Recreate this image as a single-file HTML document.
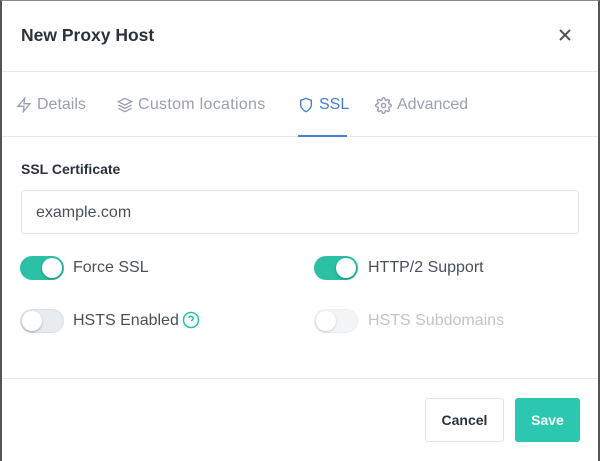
<!DOCTYPE html>
<html><head><style>
*{box-sizing:border-box;margin:0;padding:0}
body{width:600px;height:461px;background:#fff;font-family:"Liberation Sans",sans-serif;position:relative;overflow:hidden;color:#495057}
.frame{position:absolute;left:0;top:0;width:600px;height:461px;border-left:2px solid #555;border-right:2px solid #555;border-top:1px solid #888}
.abs{position:absolute}
.hr{position:absolute;left:2px;right:2px;height:1px;background:#e6e8eb}
.title{left:21px;top:25px;font-size:17.5px;font-weight:bold;color:#2b323b}
.tab{top:96px;font-size:16px;color:#9aa0ac;display:flex;align-items:center;gap:5px}
.tg{position:absolute;width:44px;height:24px;border-radius:12px}
.tg .k{position:absolute;top:2px;width:20px;height:20px;border-radius:50%;background:#fff;box-shadow:0 1px 2px rgba(0,0,0,.3)}
.on{background:#2bbfa4}.on .k{left:22px}
.off{background:#e9ecef;border:1px solid #dcdfe3}.off .k{left:1px;top:1px}
.lbl{font-size:16px;color:#495057}
</style></head><body>
<div class="frame"></div>
<div class="abs title">New Proxy Host</div>
<svg class="abs" style="left:558px;top:28px" width="14" height="14" viewBox="0 0 14 14"><path d="M2 2L12 12M12 2L2 12" stroke="#555" stroke-width="2"/></svg>
<div class="hr" style="top:71px"></div>
<div class="abs tab" style="left:16px"><svg width="16" height="16" viewBox="0 0 24 24" fill="none" stroke="#9aa0ac" stroke-width="2"><path d="M13 2L3 14h9l-1 8 10-12h-9l1-8z"/></svg>Details</div>
<div class="abs tab" style="left:117px;letter-spacing:0.3px"><svg width="16" height="16" viewBox="0 0 24 24" fill="none" stroke="#9aa0ac" stroke-width="2"><path d="M12 2L2 7l10 5 10-5-10-5zM2 17l10 5 10-5M2 12l10 5 10-5"/></svg>Custom locations</div>
<div class="abs tab" style="left:298px;color:#467fcf"><svg width="16" height="16" viewBox="0 0 24 24" fill="none" stroke="#467fcf" stroke-width="2"><path d="M12 22s8-4 8-10V5l-8-3-8 3v7c0 6 8 10 8 10z"/></svg>SSL</div>
<div class="abs tab" style="left:375px"><svg width="17" height="17" viewBox="0 0 24 24" fill="none" stroke="#9aa0ac" stroke-width="2"><circle cx="12" cy="12" r="3"/><path d="M19.4 15a1.65 1.65 0 0 0 .33 1.82l.06.06a2 2 0 1 1-2.830 2.83l-.06-.06a1.65 1.65 0 0 0-1.82-.33 1.65 1.650 0 0 0-1 1.51V21a2 2 0 0 1-4 0v-.09A1.65 1.65 0 0 0 9 19.4a1.65 1.65 0 0 0-1.82.33l-.06.06a2 2 0 1 1-2.83-2.83l.06-.06a1.65 1.65 0 0 0 .33-1.82 1.65 1.65 0 0 0-1.51-1H3a2 2 0 0 1 0-4h.09A1.65 1.65 0 0 0 4.6 9a1.65 1.65 0 0 0-.33-1.82l-.06-.06a2 2 0 1 1 2.83-2.83l.06.06a1.65 1.65 0 0 0 1.82.33H9a1.65 1.65 0 0 0 1-1.51V3a2 2 0 0 1 4 0v.09a1.65 1.65 0 0 0 1 1.51 1.65 1.65 0 0 0 1.82-.33l.06-.06a2 2 0 1 1 2.83 2.83l-.06.06a1.65 1.65 0 0 0-.33 1.82V9a1.65 1.65 0 0 0 1.51 1H21a2 2 0 0 1 0 4h-.09a1.65 1.65 0 0 0-1.51 1z"/></svg>Advanced</div>
<div class="hr" style="top:136px"></div>
<div class="abs" style="left:298px;top:135px;width:49px;height:2px;background:#467fcf"></div>
<div class="abs" style="left:21px;top:161px;font-size:14px;font-weight:bold;color:#2b323b">SSL Certificate</div>
<div class="abs" style="left:21px;top:190px;width:558px;height:44px;border:1px solid #dfe3e8;border-radius:3px;padding:13px 14px;font-size:16px;color:#495057">example.com</div>
<div class="tg on" style="left:20px;top:256px"><div class="k"></div></div>
<div class="abs lbl" style="left:73px;top:259px">Force SSL</div>
<div class="tg on" style="left:314px;top:256px"><div class="k"></div></div>
<div class="abs lbl" style="left:368px;top:259px">HTTP/2 Support</div>
<div class="tg off" style="left:20px;top:309px"><div class="k"></div></div>
<div class="abs lbl" style="left:73px;top:312px">HSTS Enabled</div>
<svg class="abs" style="left:182px;top:311px" width="18" height="18" viewBox="0 0 24 24" fill="none" stroke="#2bbfa4" stroke-width="2"><circle cx="12" cy="12" r="10"/><path d="M9.1 9a3 3 0 0 1 5.8 1c0 2-3 3-3 3M12 17h.01"/></svg>
<div class="tg off" style="left:314px;top:309px;opacity:.55"><div class="k"></div></div>
<div class="abs lbl" style="left:368px;top:312px;color:#c0c4cb">HSTS Subdomains</div>
<div class="hr" style="top:378px"></div>
<div class="abs" style="left:425px;top:398px;width:79px;height:44px;border:1px solid #dfe3e8;border-radius:3px;font-size:14px;font-weight:bold;color:#2b323b;text-align:center;line-height:42px">Cancel</div>
<div class="abs" style="left:515px;top:398px;width:65px;height:44px;background:#2bc7b0;border-radius:3px;font-size:14px;font-weight:bold;color:#fff;text-align:center;line-height:44px">Save</div>
</body></html>
